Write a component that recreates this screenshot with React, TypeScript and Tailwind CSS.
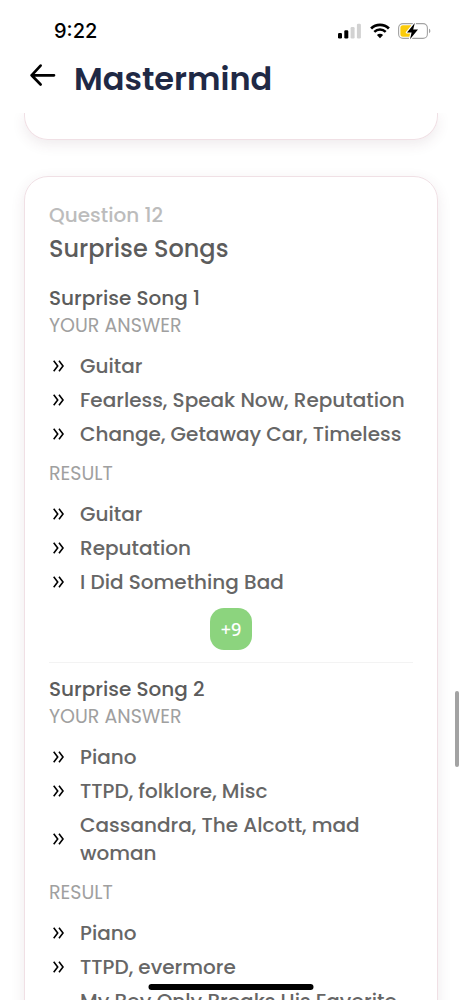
interface Section {
  title: string;
  answer: string[];
  result: string[];
  points?: number;
}

const sections: Section[] = [
  {
    title: "Surprise Song 1",
    answer: [
      "Guitar",
      "Fearless, Speak Now, Reputation",
      "Change, Getaway Car, Timeless",
    ],
    result: ["Guitar", "Reputation", "I Did Something Bad"],
    points: 9,
  },
  {
    title: "Surprise Song 2",
    answer: [
      "Piano",
      "TTPD, folklore, Misc",
      "Cassandra, The Alcott, mad woman",
    ],
    result: ["Piano", "TTPD, evermore", "My Boy Only Breaks His Favorite Toys"],
  },
];

function SignalIcon() {
  return (
    <svg width="24" height="16" viewBox="0 0 24 16" aria-hidden="true">
      <rect x="0" y="10" width="4" height="5.4" rx="1.2" fill="#000" />
      <rect x="6.3" y="7.2" width="4" height="8.2" rx="1.2" fill="#000" />
      <rect x="12.6" y="4" width="4" height="11.4" rx="1.2" fill="#d2d2d2" />
      <rect x="18.9" y="0.8" width="4" height="14.6" rx="1.2" fill="#d2d2d2" />
    </svg>
  );
}

function WifiIcon() {
  return (
    <svg width="20" height="16" viewBox="0 0 20 16" fill="none" stroke="#000" aria-hidden="true">
      <path d="M1.1 5.5a12.7 12.7 0 0 1 17.8 0" strokeWidth="2.7" />
      <path d="M4.3 8.9a8.2 8.2 0 0 1 11.4 0" strokeWidth="2.5" />
      <path d="M10 15.2 6.9 12.1a4.4 4.4 0 0 1 6.2 0z" fill="#000" stroke="none" />
    </svg>
  );
}

function BatteryIcon() {
  return (
    <svg width="33" height="18" viewBox="0 0 33 18" fill="none" aria-hidden="true">
      <rect x="0.6" y="1.6" width="28.8" height="14.8" rx="4.4" stroke="#a3a3a3" strokeWidth="1.1" />
      <path d="M5 3.3h8v11.4H5A2.6 2.6 0 0 1 2.4 12V6A2.6 2.6 0 0 1 5 3.3z" fill="#fbcb0a" />
      <path d="M31 6.8c1.8.5 1.8 3.9 0 4.4z" fill="#a3a3a3" />
      <path
        d="M16.8 1 9 10.4h4.6l-1.6 6.8 8-9.6h-4.8z"
        fill="#000"
        stroke="#fff"
        strokeWidth="2.4"
        strokeLinejoin="round"
        paintOrder="stroke"
      />
    </svg>
  );
}

function BackIcon() {
  return (
    <svg
      width="28"
      height="24"
      viewBox="0 0 28 24"
      fill="none"
      stroke="#000"
      strokeWidth="2.7"
      strokeLinecap="round"
      strokeLinejoin="round"
      aria-hidden="true"
    >
      <path d="M26 12.3H3.6M12.6 2.6 3.6 12.3l9 9.2" />
    </svg>
  );
}

function DoubleChevron() {
  return (
    <svg
      width="11"
      height="12"
      viewBox="0 0 11 12"
      fill="none"
      stroke="#000"
      strokeWidth="1.6"
      className="shrink-0"
      aria-hidden="true"
    >
      <path d="M.7.8 4.7 6l-4 5.2M6 .8 10 6l-4 5.2" />
    </svg>
  );
}

function Picks({ label, items }: { label: string; items: string[] }) {
  return (
    <>
      <h4 className="text-[19px] leading-7 text-[#a0a0a0] uppercase">{label}</h4>
      <ul className="my-3 space-y-1.5">
        {items.map((item) => (
          <li key={item} className="flex items-center gap-4 pl-1">
            <DoubleChevron />
            <span className="text-xl leading-7 font-medium text-[#666]">{item}</span>
          </li>
        ))}
      </ul>
    </>
  );
}

export default function App() {
  return (
    <div className="relative flex h-screen flex-col overflow-hidden bg-white font-['Poppins','Inter',sans-serif]">
      <header className="h-[113px] shrink-0">
        <div className="flex items-center justify-between pt-[17px] pr-[31px] pl-[54px]">
          <span className="font-['Inter',sans-serif] text-xl leading-7 font-medium text-black">
            9:22
          </span>
          <div className="flex items-center gap-2">
            <SignalIcon />
            <WifiIcon />
            <BatteryIcon />
          </div>
        </div>
        <div className="flex items-center gap-[18px] pt-3.5 pl-7">
          <button type="button" aria-label="Back" className="-mt-2">
            <BackIcon />
          </button>
          <h1 className="text-[32px] leading-10 font-semibold text-[#1f2945]">Mastermind</h1>
        </div>
      </header>

      <main className="min-h-0 flex-1 overflow-hidden px-6">
        <div className="h-[27px] rounded-b-3xl border border-t-0 border-[#f0e0e5] shadow-[0_4px_14px_rgba(90,50,70,0.10)]" />

        <section className="mt-9 rounded-3xl border border-[#f0e0e5] p-6 shadow-[0_4px_14px_rgba(90,50,70,0.10)]">
          <p className="text-xl leading-7 font-medium text-[#bcbcbc]">Question 12</p>
          <h2 className="mt-1 text-2xl leading-8 font-medium text-[#5c5c5c]">Surprise Songs</h2>

          <div className="mt-[19px] divide-y divide-[#f3f3f3]">
            {sections.map((section) => (
              <div key={section.title} className="pb-3 not-first:pt-3">
                <h3 className="text-xl leading-7 font-medium text-[#5c5c5c]">{section.title}</h3>
                <Picks label="Your answer" items={section.answer} />
                <Picks label="Result" items={section.result} />
                {section.points && (
                  <div className="mx-auto flex size-[42px] items-center justify-center rounded-[14px] bg-[#8cd47e] font-['Noto_Sans',sans-serif] text-lg font-medium text-white">
                    +{section.points}
                  </div>
                )}
              </div>
            ))}
          </div>
        </section>
      </main>

      <div className="absolute top-[691px] right-[3px] h-[76px] w-1 rounded-full bg-[#a3a3a3]" />
      <div className="absolute bottom-2.5 left-1/2 h-1.5 w-[165px] -translate-x-1/2 rounded-full bg-black" />
    </div>
  );
}
